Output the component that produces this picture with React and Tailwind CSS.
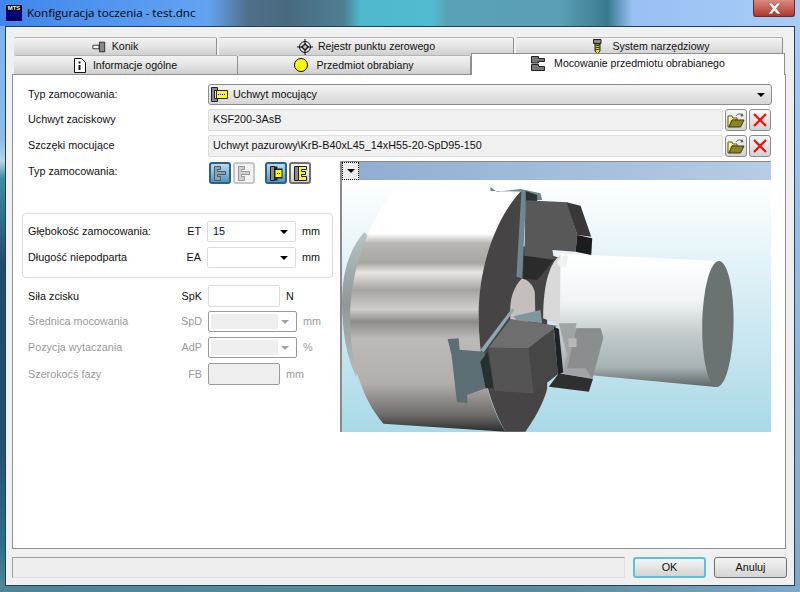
const sans = 'font-["Liberation_Sans",Arial,sans-serif]'

function Caret({ dim }) {
  return <span className={`w-0 h-0 border-x-[4px] border-x-transparent border-t-[4px] ${dim ? 'border-t-[#a0a0a0]' : 'border-t-black'}`} />
}

function KonikIcon() {
  return (
    <svg width="14" height="14" viewBox="0 0 16 14">
      <path d="M1 5h7v4H1z" fill="#fff" stroke="#222" />
      <path d="M8.500 1.500h6v11h-6z" fill="#888" stroke="#222" />
    </svg>
  )
}

function TargetIcon() {
  return (
    <svg width="16" height="16" viewBox="0 0 16 16" fill="none" stroke="#111">
      <circle cx="8" cy="8" r="5.500" />
      <path d="M8 0v16M0 8h16" />
      <path d="M8 4.500 4.500 8 8 11.500 11.500 8z" fill="#111" />
      <path d="M8 6v4M6 8h4" stroke="#fff" />
    </svg>
  )
}

function InfoIcon() {
  return (
    <svg width="12" height="15" viewBox="0 0 12 15">
      <path d="M.500.500h7l4 4v10H.500z" fill="#fff" stroke="#111" />
      <path d="M4.500 3.500h2v2h-2zM4.500 7h2v5h-2z" fill="#111" />
    </svg>
  )
}

function DrillIcon() {
  return (
    <svg width="9" height="15" viewBox="0 0 9 15">
      <path d="M.500.500h7.500v4H.500z" fill="#888" stroke="#222" />
      <path d="M2 5h5v7l-2.500 3L2 12z" fill="#f5e616" stroke="#222" />
      <path d="M2 7l5-1M2 9l5-1M2 11l5-1" stroke="#222" />
    </svg>
  )
}

function ClampIcon() {
  return (
    <svg width="15" height="15" viewBox="0 0 15 15">
      <path d="M.500.500h7v2h6v3h-6v1.500h-7z" fill="#777" stroke="#222" />
      <path d="M.500 8.500h7v2h6v4h-13z" fill="#777" stroke="#222" />
    </svg>
  )
}

function ChuckSelectIcon() {
  return (
    <svg width="17" height="15" viewBox="0 0 17 15">
      <path d="M.500.500h6v3h-3v8h3v3h-6z" fill="#888" stroke="#222" />
      <path d="M5.500 3.500h11v8h-11z" fill="#ff0" stroke="#222" />
      <path d="M7 7.500h8" stroke="#222" strokeDasharray="1 1" />
    </svg>
  )
}

function FolderIcon() {
  return (
    <svg width="18" height="15" viewBox="0 0 18 15">
      <path d="M9 3c1-2 4-3 6-1" fill="none" stroke="#555" />
      <path d="M15 0l1.500 3-3 .500z" fill="#555" />
      <path d="M1 3h4l1 2h4v2H5L2 14H1z" fill="#f8f48c" stroke="#5a5a20" />
      <path d="M5 7h12l-3.500 7H2z" fill="#8c8426" stroke="#3c3a10" />
    </svg>
  )
}

function RedX() {
  return (
    <svg width="16" height="16" viewBox="0 0 16 16" stroke="#f00" strokeWidth="2" fill="none">
      <path d="M2 2l12 12M14 2 2 14" />
    </svg>
  )
}

function CloseGlyph() {
  return (
    <svg width="15" height="11" viewBox="0 0 15 11" fill="#f4f4f4" stroke="#6b3a36" strokeWidth=".6">
      <path d="M1 0h4l2.500 3L10 0h4l-4.500 5.500L14 11h-4L7.500 8 5 11H1l4.500-5.500z" />
    </svg>
  )
}

// the four mounting buttons: jaw type on the left pair, clamping side on the right pair
function ChuckButton({ on, faded, kind }) {
  return (
    <div className={`w-[22px] h-[22px] rounded-[3px] border-2 flex items-center justify-center ${
      on ? 'border-[#2c6288] bg-gradient-to-b from-[#bcdcf0] to-[#4f94c0]'
        : faded ? 'border-[#c4c8c8] bg-[#f2f2f2]'
        : 'border-[#707070] bg-gradient-to-b from-[#f6f6f6] to-[#d0d0d0]'
    }`}>
      <svg width="15" height="17" viewBox="0 0 15 17">
        {kind === 'jaw' && (
          <path d="M1.500 1.500h6v3h-3v2h8v3h-8v2h3v4h-6z" fill={faded ? '#cfcfcf' : '#8da3b2'} stroke={faded ? '#999' : '#4c5c68'} />
        )}
        {kind === 'box' && (
          <>
            <path d="M1.500 1.500h4v14h-4z" fill="#8a8a8a" stroke="#1a1a1a" />
            <path d="M5.500 1.500h3v2h5v10h-5v2h-3z" fill="#222" />
            <path d="M6.500 5h6v7h-6z" fill="#ff0" />
            <path d="M8 8.500h4" stroke="#222" strokeDasharray="1 1" />
          </>
        )}
        {kind === 'comb' && (
          <>
            <path d="M1.500 1.500h4v14h-4z" fill="#8a8a8a" stroke="#1a1a1a" />
            <path d="M5.500 1.500h8v3h-5v2h4v3h-4v2h5v4h-8z" fill="#ff0" stroke="#1a1a1a" />
          </>
        )}
      </svg>
    </div>
  )
}

function Tab({ w, icon, label, gap = 'gap-[10px]', extra = '' }) {
  return (
    <div className={`${w} h-full shrink-0 flex items-center justify-center ${gap} ${extra} rounded-t-[2px] border-r border-r-[#8f8f8f] border-t border-t-[#b5b5b5] bg-gradient-to-b from-[#f3f3f3] via-[#e4e4e4] to-[#cfcfcf] text-[10.6px]`}>
      {icon}
      <span>{label}</span>
    </div>
  )
}

function FieldRow({ label, children }) {
  return (
    <div className="flex items-center">
      <span className="w-[186px] shrink-0 pl-[6px] pb-[1px]">{label}</span>
      {children}
    </div>
  )
}

function FileRow({ label, value }) {
  return (
    <FieldRow label={label}>
      <div className="w-[515px] h-[22px] border border-[#dcdcdc] rounded-[2px] bg-[#f0f0f0] flex items-center pl-[4px] pb-[1px]">{value}</div>
      <div className="w-[22px] h-[22px] ml-[2px] rounded-[3px] border border-[#8c8c8c] bg-gradient-to-b from-[#f6f6f6] to-[#d2d2d2] flex items-center justify-center"><FolderIcon /></div>
      <div className="w-[22px] h-[22px] ml-[2px] rounded-[3px] border border-[#8c8c8c] bg-gradient-to-b from-[#f6f6f6] to-[#d2d2d2] flex items-center justify-center"><RedX /></div>
    </FieldRow>
  )
}

function ComboParam({ label, code, value, unit, dim, inGroup, className = '' }) {
  return (
    <div className={`flex items-center ${dim ? 'text-[#9a9a9a]' : ''} ${className}`}>
      <span className={`${inGroup ? 'w-[143px] pl-[5px]' : 'w-[145px] pl-[6px]'} shrink-0`}>{label}</span>
      <span className="w-[35px] shrink-0 text-right">{code}</span>
      <div className={`ml-[6px] w-[89px] h-[21px] bg-white rounded-[2px] border flex items-center pl-[2px] pr-[7px] ${dim ? 'border-[#9a9a9a]' : 'border-[#dcdcdc]'}`}>
        <div className={`w-[67px] h-[15px] flex items-center pl-[3px] ${dim ? 'bg-[#efefef]' : ''}`}>{value}</div>
        <span className="ml-auto flex"><Caret dim={dim} /></span>
      </div>
      <span className="ml-[6px]">{unit}</span>
    </div>
  )
}

function TextParam({ label, code, unit, dim, className = '' }) {
  return (
    <div className={`flex items-center ${dim ? 'text-[#9a9a9a]' : ''} ${className}`}>
      <span className="w-[145px] pl-[6px] shrink-0">{label}</span>
      <span className="w-[35px] shrink-0 text-right">{code}</span>
      <div className={`ml-[6px] w-[72px] h-[22px] rounded-[2px] border ${dim ? 'border-[#9a9a9a] bg-[#efefef]' : 'border-[#dcdcdc] bg-white'}`} />
      <span className="ml-[6px]">{unit}</span>
    </div>
  )
}

function ChuckPicture() {
  return (
    <svg className="block w-full flex-1 min-h-0" viewBox="6 75 1284 756" preserveAspectRatio="none">
      <defs>
        <linearGradient id="sky" x1="0" y1="0" x2="0" y2="1">
          <stop offset="0" stopColor="#ffffff" />
          <stop offset="1" stopColor="#a9d9e8" />
        </linearGradient>
        <linearGradient id="body" x1="0" y1="0" x2="0" y2="1">
          <stop offset="0" stopColor="#ffffff" />
          <stop offset=".19" stopColor="#ffffff" />
          <stop offset=".23" stopColor="#b8b6b3" />
          <stop offset=".31" stopColor="#a8a6a3" />
          <stop offset=".35" stopColor="#e8e4e2" />
          <stop offset=".42" stopColor="#a6a4a0" />
          <stop offset=".5" stopColor="#cfcdca" />
          <stop offset=".55" stopColor="#8e8c88" />
          <stop offset=".62" stopColor="#bdb9b7" />
          <stop offset=".8" stopColor="#b3afad" />
          <stop offset=".93" stopColor="#6f6d6b" />
          <stop offset="1" stopColor="#2c2c2c" />
        </linearGradient>
        <linearGradient id="work" x1="0" y1="0" x2="0" y2="1">
          <stop offset="0" stopColor="#ffffff" />
          <stop offset=".35" stopColor="#f2f5f6" />
          <stop offset=".6" stopColor="#c3cbcd" />
          <stop offset=".85" stopColor="#a7b3b5" />
          <stop offset="1" stopColor="#5f6666" />
        </linearGradient>
        <linearGradient id="back" x1="0" y1="0" x2="0" y2="1">
          <stop offset="0" stopColor="#b9c3c3" />
          <stop offset=".5" stopColor="#8f9797" />
          <stop offset="1" stopColor="#b5bdbd" />
        </linearGradient>
      </defs>
      <rect x="6" y="75" width="1284" height="756" fill="url(#sky)" />
      {/* back flange */}
      <path d="M72 232C30 280 6 350 6 440c0 90 15 170 42 225l60-100V260z" fill="url(#back)" />
      {/* workpiece */}
      <path d="M660 296 1140 318 1125 696 640 650z" fill="url(#work)" />
      <ellipse cx="1131" cy="507" rx="47" ry="189" fill="#6b7272" transform="rotate(1 1131 507)" />
      {/* main body */}
      <path d="M170 96 560 104C480 180 415 340 415 480c0 140 30 270 80 350L130 806C65 730 30 620 30 490 30 340 90 190 170 96z" fill="url(#body)" />
      {/* front face */}
      <path d="M545 106C470 180 415 330 415 480c0 140 30 260 80 350h60c30-40 60-100 65-130L620 480l40-170-120-40z" fill="#464444" />
      <path d="M545 370c-25 25-36 60-36 100 0 20 2 35 6 50l70-30 -2-80c-8-25-22-35-38-40z" fill="#c4bfbc" />
      <path d="M660 300c-30 20-52 80-52 190l50 20z" fill="#d9d9d9" />
      <path d="M650 325c10-22 25-30 32-20l-4 28c-8 8-20 6-28-8z" fill="#f2f2f2" />
      {/* back jaw */}
      <path d="M450 96 470 110 540 102 600 115 605 135 560 135 555 110 480 108 450 108z" fill="#6f878f" />
      <path d="M543 108 558 108 545 370 528 365z" fill="#6d8791" />
      <path d="M556 108 590 120 590 138 556 138z" fill="#2a3436" />
      <path d="M555 136 680 142 710 240 705 290 636 285 640 312 552 302z" fill="#595858" />
      <path d="M678 142 720 152 752 245 710 240z" fill="#383838" />
      <path d="M710 240 755 250 752 300 705 290z" fill="#1c1c1c" />
      <path d="M550 302 640 316 590 375 548 372z" fill="#2b2b2b" />
      {/* lower jaw parts */}
      <path d="M655 505 708 505 705 520 780 520 788 548 755 672 665 655 680 600z" fill="#a0a4a4" />
      <path d="M708 520 780 520 788 548 755 672 735 640 680 640z" fill="#8a8e8e" />
      <rect x="684" y="550" width="24" height="26" fill="#b8b8b8" />
      <path d="M655 655 757 672 745 710 625 695z" fill="#2f2f2f" />
      {/* lower clamp plate */}
      <path d="M322 552 355 550 358 584 432 590 448 695 380 720 382 744 350 742 334 600z" fill="#5c6e74" />
      <path d="M420 585 515 460 522 465 430 592z" fill="#8fa8b2" />
      <path d="M520 484 600 465 605 505 528 495z" fill="#7e969e" />
      <path d="M420 620 442 590 460 700 436 700z" fill="#26302f" />
      {/* lower jaw */}
      <path d="M510 492 650 512 565 580 445 578z" fill="#6f6e6e" />
      <path d="M445 578 565 580 580 715 462 708z" fill="#555454" />
      <path d="M565 580 640 520 652 658 580 715z" fill="#474646" />
      <path d="M640 515 655 522 668 652 652 660z" fill="#1e2224" />
    </svg>
  )
}

export default function App() {
  return (
    <div className={`w-[800px] h-[592px] overflow-hidden flex flex-col text-[10.8px] leading-none text-[#111] ${sans}`}>
      {/* title bar */}
      <div className="h-[26px] shrink-0 flex items-center pl-[6px] pr-[5px] bg-[linear-gradient(90deg,#3f86ea_0%,#62a4f2_26%,#4f6f88_31%,#486a80_36%,#4d7f93_43%,#4fb8cc_45%,#52bbd0_54%,#5aa0b6_56%,#5a9fb5_70%,#3a7a90_76%,#98c0f2_79%,#a8ccf8_100%)]">
        <div className="w-[16px] h-[16px] bg-gradient-to-b from-[#0000c8] to-[#000050] mr-[5px] flex flex-col">
          <div className="h-[6px] bg-black text-white text-[6px] font-bold text-center overflow-hidden">MTS</div>
        </div>
        <span className="text-[11.6px] text-black font-['Open_Sans',sans-serif]">Konfiguracja toczenia - test.dnc</span>
        <div className="ml-auto self-start w-[42px] h-[17px] rounded-b-[3px] border border-t-0 border-[#6b2a24] bg-gradient-to-b from-[#d98a80] to-[#b0352a] flex items-center justify-center"><CloseGlyph /></div>
      </div>

      <div className="h-[560px] shrink-0 flex">
        <div className="w-[5px] shrink-0 bg-[linear-gradient(180deg,#7ab3f0_0px,#8cbde8_115px,#b6d8de_135px,#3a8fa5_152px,#1f4a68_240px,#24506c_420px,#2a7088_520px,#4f8496_560px)]" />

        {/* dialog */}
        <div className="w-[790px] shrink-0 border border-[#22405a] bg-[#f0f0f0] pl-[6px] pt-[10px] flex flex-col">
          <div className="h-[18px] ml-[2px] flex gap-[2px] shrink-0">
            <Tab w="w-[203px]" icon={<KonikIcon />} label="Konik" gap="gap-[6px]" />
            <Tab w="w-[295px]" icon={<TargetIcon />} label="Rejestr punktu zerowego" gap="gap-[5px]" />
            <Tab w="w-[267px]" icon={<DrillIcon />} label="System narzędziowy" extra="pl-[5px]" />
          </div>
          <div className="h-[19px] ml-[2px] flex shrink-0">
            <Tab w="w-[224px]" icon={<InfoIcon />} label="Informacje ogólne" gap="gap-[7px]" />
            <Tab w="w-[233px]" icon={<span className="w-[14px] h-[14px] rounded-full bg-[#ffff00] border border-black" />} label="Przedmiot obrabiany" gap="gap-[8px]" />
            <div className="w-[314px] h-[22px] -mt-[2px] relative z-10 shrink-0 flex items-center justify-center gap-[8px] pb-[3px] bg-white border border-b-0 border-[#8f8f8f] text-[10.6px]">
              <ClampIcon />
              <span>Mocowanie przedmiotu obrabianego</span>
            </div>
          </div>

          {/* tab page */}
          <div className="w-[774px] h-[475px] shrink-0 bg-white border border-[#8f8f8f] pl-[9px] pt-[9px] flex flex-col">
            <FieldRow label="Typ zamocowania:">
              <div className="w-[564px] h-[21px] rounded-[3px] border border-[#8c8c8c] bg-gradient-to-b from-[#f4f4f4] to-[#d6d6d6] flex items-center pl-[2px] pr-[6px] gap-[5px]">
                <ChuckSelectIcon />
                <span>Uchwyt mocujący</span>
                <span className="ml-auto flex"><Caret /></span>
              </div>
            </FieldRow>
            <div className="h-[4px]" />
            <FileRow label="Uchwyt zaciskowy" value="KSF200-3AsB" />
            <div className="h-[4px]" />
            <FileRow label="Szczęki mocujące" value="Uchwyt pazurowy\KrB-B40xL45_14xH55-20-SpD95-150" />

            <div className="flex mt-[5px]">
              <div className="w-[311px] shrink-0">
                <div className="flex items-start">
                  <span className="w-[187px] shrink-0 pl-[6px] pt-[4px]">Typ zamocowania:</span>
                  <div className="flex gap-[2px]">
                    <ChuckButton on kind="jaw" />
                    <ChuckButton faded kind="jaw" />
                    <div className="w-[6px]" />
                    <ChuckButton on kind="box" />
                    <ChuckButton kind="comb" />
                  </div>
                </div>

                <div className="mt-[29px] h-[65px] border border-[#d8dde2] rounded-[4px] flex flex-col pt-[7px] gap-[5px]">
                  <ComboParam label="Głębokość zamocowania:" code="ET" value="15" unit="mm" inGroup />
                  <ComboParam label="Długość niepodparta" code="EA" unit="mm" inGroup />
                </div>

                <div className="mt-[7px] flex flex-col">
                  <TextParam label="Siła zcisku" code="SpK" unit="N" />
                  <ComboParam label="Średnica mocowania" code="SpD" unit="mm" dim className="mt-[4px]" />
                  <ComboParam label="Pozycja wytaczania" code="AdP" unit="%" dim className="mt-[5px]" />
                  <TextParam label="Szerokoćś fazy" code="FB" unit="mm" dim className="mt-[5px]" />
                </div>
              </div>

              <div className="ml-[7px] -mt-[1px] w-[431px] h-[271px] border-l-2 border-t border-[#8a8a8a] flex flex-col">
                <div className="h-[18px] shrink-0 bg-gradient-to-r from-[#8fadd0] to-[#b6cce6]">
                  <div className="w-[17px] h-[18px] bg-[#eeeeee] border border-dotted border-black flex items-center justify-center"><Caret /></div>
                </div>
                <ChuckPicture />
              </div>
            </div>
          </div>

          {/* bottom bar */}
          <div className="flex items-center mt-[8px]">
            <div className="w-[613px] h-[21px] border border-t-[#a0a0a0] border-l-[#a0a0a0] border-r-[#e0e0e0] border-b-[#e0e0e0] bg-[#eeeeee]" />
            <button className="ml-[8px] w-[73px] h-[21px] rounded-[3px] border-2 border-[#5cc0e0] bg-gradient-to-b from-[#f4f4f4] to-[#d4d4d4] text-[#111]">OK</button>
            <button className="ml-[8px] w-[73px] h-[21px] rounded-[3px] border border-[#707070] bg-gradient-to-b from-[#f4f4f4] to-[#d4d4d4] text-[#111]">Anuluj</button>
          </div>
        </div>

        <div className="w-[5px] shrink-0 bg-gradient-to-b from-[#a8ccf8] to-[#7fa8c8]" />
      </div>

      <div className="h-[6px] shrink-0 bg-[linear-gradient(90deg,#4f8496_0%,#5b8c9f_70%,#7fa8c8_100%)]" />
    </div>
  )
}
